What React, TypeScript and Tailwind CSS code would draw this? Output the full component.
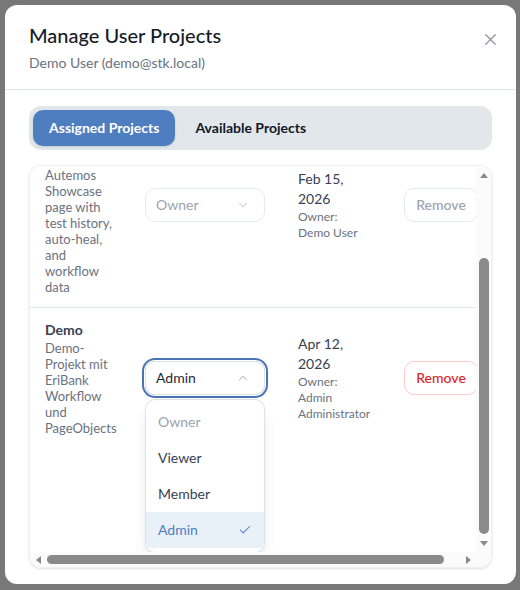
import React, { useLayoutEffect, useRef } from "react";
import { ChevronDown, ChevronUp, Check, X } from "lucide-react";

const font = { fontFamily: "Lato, 'Noto Sans', sans-serif" };

function Lines({ lines }: { lines: string[] }) {
  return (
    <div className="text-[13px] leading-4 text-[#6b7280]">
      {lines.map((l, i) => (
        <div key={i} className="whitespace-nowrap">
          {l}
        </div>
      ))}
    </div>
  );
}

export default function App() {
  const ref = useRef<HTMLDivElement>(null);
  useLayoutEffect(() => {
    if (ref.current) {
      ref.current.scrollTop = 63;
      ref.current.scrollLeft = 0;
    }
  }, []);

  return (
    <div className="w-[520px] h-[590px] bg-[#787878] pt-[5px] pl-[5px]" style={font}>
      <div className="w-[511px] h-[579px] bg-white rounded-xl flex flex-col">
        <div className="px-6 pt-4 pb-4 border-b border-[#dfe5e8] flex justify-between">
          <div>
            <div className="text-[20px] leading-7 font-medium text-[#161b26]">Manage User Projects</div>
            <div className="mt-1 text-sm leading-5 text-[#6b7280]">Demo User (demo@stk.local)</div>
          </div>
          <button className="mt-[8px] mr-[-8px] h-5 w-5 flex items-center justify-center text-[#8a94a6]">
            <X size={19} strokeWidth={1.5} />
          </button>
        </div>
        <div className="flex-1 min-h-0 flex flex-col px-6 pt-4 pb-4">
          <div className="h-11 bg-[#e1e7ea] rounded-xl p-1 flex gap-1">
            <div className="h-9 px-4 rounded-[10px] bg-[#4e7ebf] text-white text-sm font-bold flex items-center shadow-sm">
              Assigned Projects
            </div>
            <div className="h-9 px-4 rounded-[10px] text-[#111827] text-sm font-bold flex items-center">
              Available Projects
            </div>
          </div>
          <div className="mt-[15px] flex-1 min-h-0 border border-[#edf1f3] rounded-xl overflow-hidden shadow-sm grid grid-cols-[1fr_15px] grid-rows-[1fr_15px]">
            <div ref={ref} className="overflow-hidden min-h-0 min-w-0">
              <div className="w-[484px] relative">
                {/* Row 1 */}
                <div className="flex items-center pl-[15px] py-3 border-b border-[#e2e8eb]">
                  <div className="w-[86px]">
                    <div className="text-sm leading-5 font-bold text-[#374151] whitespace-nowrap">Showcase</div>
                    <Lines
                      lines={[
                        "Demo project",
                        "for the",
                        "Autemos",
                        "Showcase",
                        "page with",
                        "test history,",
                        "auto-heal,",
                        "and",
                        "workflow",
                        "data",
                      ]}
                    />
                  </div>
                  <div className="ml-[14px] w-[120px] h-[34px] rounded-[10px] border border-[#e5eaee] flex items-center justify-between pl-[10px] pr-[14px] text-sm text-[#9ca3af]">
                    <span>Owner</span>
                    <ChevronDown size={14} strokeWidth={1.5} className="text-[#b5bcc6]" />
                  </div>
                  <div className="ml-[33px] w-[80px]">
                    <div className="text-sm leading-5 text-[#374151]">Feb 15,</div>
                    <div className="text-sm leading-5 text-[#374151]">2026</div>
                    <div className="text-xs leading-4 text-[#6b7280]">Owner:</div>
                    <div className="text-xs leading-4 text-[#6b7280]">Demo User</div>
                  </div>
                  <div className="ml-[26px] w-[74px] h-[34px] rounded-[10px] border border-[#e5eaee] flex items-center justify-center text-sm font-medium text-[#9ca3af]">
                    Remove
                  </div>
                </div>
                {/* Row 2 */}
                <div className="flex items-center pl-[15px] py-3">
                  <div className="w-[86px]">
                    <div className="text-sm leading-5 font-bold text-[#374151] whitespace-nowrap">Demo</div>
                    <Lines lines={["Demo-", "Projekt mit", "EriBank", "Workflow", "und", "PageObjects"]} />
                  </div>
                  <div className="ml-[14px] w-[120px] relative">
                    <div className="h-[34px] rounded-[10px] border border-[#dbe3e6] ring-2 ring-[#4a74b4] ring-offset-1 flex items-center justify-between pl-[10px] pr-[14px] text-sm text-[#1f2937]">
                      <span>Admin</span>
                      <ChevronUp size={14} strokeWidth={1.5} className="text-[#8a94a6]" />
                    </div>
                    <div className="absolute left-0 top-[38px] w-[120px] bg-white border border-[#dbe3e6] rounded-[10px] py-1 shadow-lg overflow-hidden z-10">
                      <div className="h-9 flex items-center px-3 text-sm text-[#9ca3af]">Owner</div>
                      <div className="h-9 flex items-center px-3 text-sm text-[#374151]">Viewer</div>
                      <div className="h-9 flex items-center px-3 text-sm text-[#374151]">Member</div>
                      <div className="h-9 flex items-center justify-between px-3 text-sm bg-[#e8f0f8] text-[#4e7ebf]">
                        <span>Admin</span>
                        <Check size={14} strokeWidth={1.8} />
                      </div>
                    </div>
                  </div>
                  <div className="ml-[33px] w-[80px]">
                    <div className="text-sm leading-5 text-[#374151]">Apr 12,</div>
                    <div className="text-sm leading-5 text-[#374151]">2026</div>
                    <div className="text-xs leading-4 text-[#6b7280]">Owner:</div>
                    <div className="text-xs leading-4 text-[#6b7280]">Admin</div>
                    <div className="text-xs leading-4 text-[#6b7280]">Administrator</div>
                  </div>
                  <div className="ml-[26px] w-[74px] h-[34px] rounded-[10px] border border-[#fecaca] flex items-center justify-center text-sm font-medium text-[#dc2626]">
                    Remove
                  </div>
                </div>
                <div className="h-[113px]" />
              </div>
            </div>
            {/* vertical scrollbar */}
            <div className="bg-[#fbfbfb] flex flex-col items-center min-h-0">
              <div className="h-[18px] flex items-center justify-center">
                <div className="w-0 h-0 border-x-[4px] border-x-transparent border-b-[5px] border-b-[#8a8a8a]" />
              </div>
              <div className="mt-[74px] w-[10px] h-[276px] rounded-full bg-[#8a8a8a]" />
              <div className="mt-auto h-[18px] flex items-center justify-center">
                <div className="w-0 h-0 border-x-[4px] border-x-transparent border-t-[5px] border-t-[#8a8a8a]" />
              </div>
            </div>
            {/* horizontal scrollbar */}
            <div className="bg-[#fbfbfb] flex items-center min-w-0">
              <div className="w-[16px] flex items-center justify-center">
                <div className="w-0 h-0 border-y-[4px] border-y-transparent border-r-[5px] border-r-[#8a8a8a]" />
              </div>
              <div className="ml-[1px] h-[9px] w-[397px] rounded-full bg-[#8a8a8a]" />
              <div className="ml-auto w-[16px] flex items-center justify-center">
                <div className="w-0 h-0 border-y-[4px] border-y-transparent border-l-[5px] border-l-[#8a8a8a]" />
              </div>
            </div>
            <div className="bg-[#fbfbfb]" />
          </div>
        </div>
      </div>
    </div>
  );
}
